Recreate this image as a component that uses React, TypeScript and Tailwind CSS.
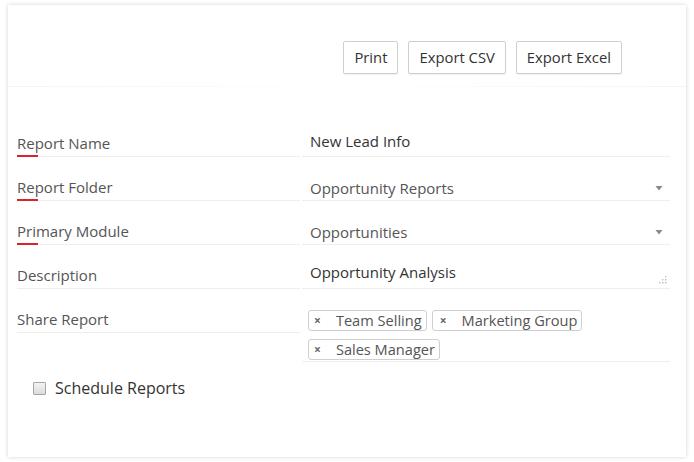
import React from 'react';

const rows = [
  { label: 'Report Name', value: 'New Lead Info', required: true, kind: 'text' },
  { label: 'Report Folder', value: 'Opportunity Reports', required: true, kind: 'select' },
  { label: 'Primary Module', value: 'Opportunities', required: true, kind: 'select' },
  { label: 'Description', value: 'Opportunity Analysis', required: false, kind: 'area' },
];

const tags = ['Team Selling', 'Marketing Group', 'Sales Manager'];

const Caret = () => (
  <svg width="8" height="6" viewBox="0 0 8 6" className="mb-[9px] mr-[7px]">
    <path d="M0.5 1 L7.5 1 L4 5.5 Z" fill="#8a8a8a" />
  </svg>
);

const Grip = () => (
  <svg width="8" height="8" viewBox="0 0 8 8" className="mb-[2px] mr-[3px]">
    <rect x="6" y="0" width="1.4" height="1.4" fill="#bbb" />
    <rect x="3" y="3" width="1.4" height="1.4" fill="#bbb" />
    <rect x="6" y="3" width="1.4" height="1.4" fill="#bbb" />
    <rect x="0" y="6" width="1.4" height="1.4" fill="#bbb" />
    <rect x="3" y="6" width="1.4" height="1.4" fill="#bbb" />
    <rect x="6" y="6" width="1.4" height="1.4" fill="#bbb" />
  </svg>
);

const Tag: React.FC<{ name: string; wide?: boolean }> = ({ name, wide }) => (
  <span className="flex h-[21px] items-center rounded-[3px] border border-[#cfcfcf] bg-white pr-[4px] text-[14.6px] text-[#555]">
    <span className={`text-[12px] font-bold text-[#666] ${wide ? 'pl-[7px] pr-[15px]' : 'pl-[5px] pr-[15px]'}`}>×</span>
    {name}
  </span>
);

export default function App() {
  return (
    <div className="h-[462px] w-[694px] bg-white pl-[8px] pt-[5px]" style={{ fontFamily: '"Open Sans", "Noto Sans", sans-serif' }}>
      <div className="h-[452px] w-[678px] bg-white shadow-[0_0_4px_rgba(0,0,0,0.18)]">
        {/* toolbar */}
        <div className="flex justify-end gap-[10px] pr-[64px] pt-[36px]">
          {['Print', 'Export CSV', 'Export Excel'].map(b => (
            <button
              key={b}
              className="h-[33px] rounded-[2px] border border-[#cfcfcf] bg-white px-[10px] text-[14.8px] text-[#333] shadow-[0_1px_1px_rgba(0,0,0,0.06)]"
            >
              {b}
            </button>
          ))}
        </div>
        <div className="mt-[12px] h-px bg-gradient-to-r from-[#f4f4f4] via-white to-[#f4f4f4]" />

        {/* form */}
        <div className="mt-[26px] grid grid-cols-[283px_368px] gap-x-[2px] pl-[9px]">
          {rows.map(r => (
            <React.Fragment key={r.label}>
              <div className="relative flex h-[44px] items-end border-b border-[#eeeeee] pb-[2px] text-[15px] text-[#555]">
                {r.label}
                {r.required && <span className="absolute bottom-[-1px] left-0 h-[2px] w-[21px] bg-[#d9232d]" />}
              </div>
              <div className={`flex h-[44px] items-end justify-between border-b border-[#eeeeee] pl-[8px] text-[15px] ${r.kind === 'text' ? 'pb-[4px] text-[#333]' : r.kind === 'area' ? 'pb-[5px] text-[#333]' : 'pb-0 text-[#555]'}`}>
                <span className={r.kind === 'select' ? 'mb-[1px]' : ''}>{r.value}</span>
                {r.kind === 'select' && <Caret />}
                {r.kind === 'area' && <span className="-mb-[3px]"><Grip /></span>}
              </div>
            </React.Fragment>
          ))}
          <div className="flex h-[44px] items-end border-b border-[#eeeeee] pb-[2px] text-[15px] text-[#555]">Share Report</div>
          <div className="flex flex-col gap-[8px] border-b border-[#eeeeee] pb-[1px] pl-[6px] pt-[21px]">
            <div className="flex gap-[5px]">
              <Tag name={tags[0]} />
              <Tag name={tags[1]} wide />
            </div>
            <div className="flex">
              <Tag name={tags[2]} />
            </div>
          </div>
        </div>

        {/* schedule */}
        <label className="mt-[14px] flex items-center pl-[25px] text-[16px] text-[#333]">
          <span className="mr-[9px] h-[13px] w-[13px] rounded-[1px] border border-[#a6a6a6] bg-gradient-to-b from-[#f4f4f4] to-[#dcdcdc]" />
          Schedule Reports
        </label>
      </div>
    </div>
  );
}
